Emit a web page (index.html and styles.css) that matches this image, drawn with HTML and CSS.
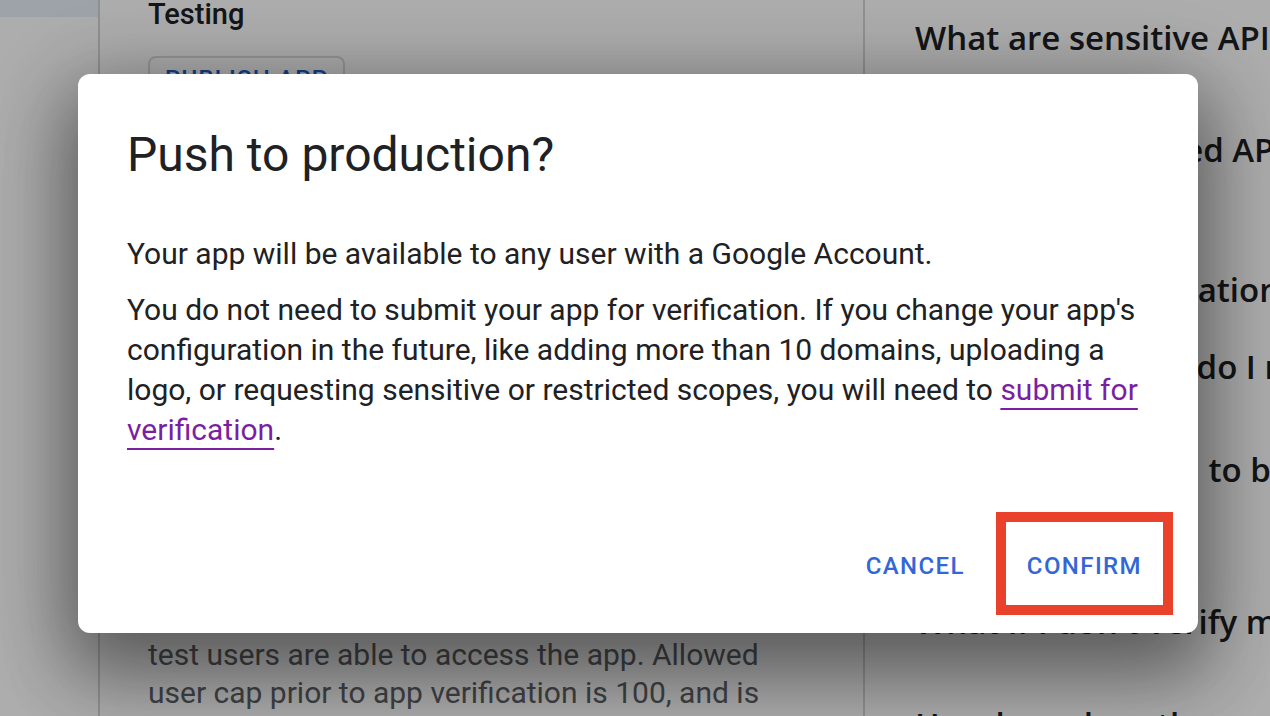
FILE: index.html
```html
<!DOCTYPE html>
<html lang="en">
<head>
<meta charset="utf-8">
<title>OAuth consent screen</title>
<link rel="stylesheet" href="styles.css">
</head>
<body>
<div class="page">
  <nav class="nav">
    <div class="nav-item nav-item-active"></div>
  </nav>
  <main class="main">
    <h2 class="status-title">Testing</h2>
    <button class="outline-btn">PUBLISH APP</button>
    <p class="status-text">While publishing status is set to "Testing", only test users are able to access the app. Allowed user cap prior to app verification is 100, and is counted over the entire lifetime of the app.</p>
  </main>
  <aside class="help">
    <h3 class="faq-q">What are sensitive API scopes?</h3>
    <h3 class="faq-q">What are restricted API scopes?</h3>
    <h3 class="faq-q">Who needs verification?</h3>
    <h3 class="faq-q">What verification do I need?</h3>
    <h3 class="faq-q">Does an app need to be verified?</h3>
    <h3 class="faq-q">What if I don't verify my app?</h3>
    <h3 class="faq-q">How long does the verification take?</h3>
  </aside>
</div>

<div class="scrim">
  <div class="dialog" role="dialog">
    <h1 class="dialog-title">Push to production?</h1>
    <div class="dialog-content">
      <p>Your app will be available to any user with a Google Account.</p>
      <p>You do not need to submit your app for verification. If you change your app's configuration in the future, like adding more than 10 domains, uploading a logo, or requesting sensitive or restricted scopes, you will need to <a class="link" href="#">submit for verification</a>.</p>
    </div>
    <div class="dialog-actions">
      <button class="text-btn">CANCEL</button>
      <div class="highlight">
        <button class="text-btn text-btn-confirm">CONFIRM</button>
      </div>
    </div>
  </div>
</div>
</body>
</html>
```

FILE: styles.css
```css
* { box-sizing: border-box; }

html, body {
  margin: 0;
  padding: 0;
}

body {
  width: 1270px;
  height: 716px;
  overflow: hidden;
  position: relative;
  background: #ffffff;
  font-family: Roboto, "Liberation Sans", Arial, sans-serif;
  color: #202124;
}

.page {
  display: flex;
  height: 716px;
}

.nav {
  width: 100px;
  flex: none;
  border-right: 2px solid #d6d6d6;
}

.nav-item {
  height: 17px;
}

.nav-item-active {
  background: #e9effa;
}

.main {
  width: 765px;
  flex: none;
  border-right: 2px solid #d6d6d6;
  padding-left: 48px;
}

.status-title {
  margin: -4px 0 0;
  font-size: 29px;
  line-height: 36px;
  font-weight: 500;
  color: #202124;
}

.outline-btn {
  display: block;
  margin-top: 24px;
  height: 46px;
  padding: 0 15px;
  border: 2px solid #dadce0;
  border-radius: 8px;
  background: #ffffff;
  font-family: Roboto, "Liberation Sans", Arial, sans-serif;
  font-size: 24px;
  font-weight: 500;
  letter-spacing: 1.2px;
  color: #1a5fc8;
}

.status-text {
  margin: 496px 0 0;
  width: 640px;
  font-size: 30px;
  line-height: 38px;
  color: #5f6368;
}

.help {
  flex: 1;
  padding: 18px 0 0 50px;
  overflow: hidden;
}

.faq-q {
  margin: 0;
  white-space: nowrap;
  font-family: "Open Sans", Roboto, sans-serif;
  font-size: 33px;
  line-height: 40px;
  font-weight: 600;
  color: #202124;
}

.faq-q:nth-child(2) { margin-top: 72px; }
.faq-q:nth-child(3) { margin-top: 100px; }
.faq-q:nth-child(4) { margin-top: 37px; }
.faq-q:nth-child(5) { margin-top: 63px; }
.faq-q:nth-child(6) { margin-top: 112px; }
.faq-q:nth-child(7) { margin-top: 63px; }

/* dialog overlay */
.scrim {
  position: absolute;
  inset: 0;
  background: rgba(0, 0, 0, 0.32);
}

.dialog {
  position: absolute;
  left: 78px;
  top: 74px;
  width: 1120px;
  height: 559px;
  display: flex;
  flex-direction: column;
  background: #ffffff;
  border-radius: 12px;
  box-shadow:
    0 22px 70px 8px rgba(0, 0, 0, 0.30),
    0 48px 76px 6px rgba(0, 0, 0, 0.16),
    0 18px 92px 16px rgba(0, 0, 0, 0.12);
}

.dialog-title {
  margin: 0;
  padding: 49px 48px 0 49px;
  font-size: 48px;
  line-height: 64px;
  font-weight: 400;
  color: #202124;
}

.dialog-content {
  padding: 47px 48px 0 49px;
  font-size: 30px;
  line-height: 40px;
  color: #202124;
}

.dialog-content p {
  margin: 0 0 16px;
}

.link {
  color: #7b1fa2;
  text-decoration: underline;
  text-decoration-thickness: 2px;
  text-underline-offset: 8px;
}

.dialog-actions {
  margin-top: auto;
  display: flex;
  justify-content: flex-end;
  align-items: center;
  gap: 15px;
  padding: 0 25px 18px 0;
}

.text-btn {
  height: 72px;
  padding: 5px 16px 0;
  border: none;
  background: transparent;
  font-family: Roboto, "Liberation Sans", Arial, sans-serif;
  font-size: 24px;
  font-weight: 500;
  letter-spacing: 1.4px;
  color: #3367d6;
}

.highlight {
  height: 103px;
  border: 10px solid #e9412b;
  display: flex;
  align-items: center;
  padding: 0 5px;
}

.text-btn-confirm {
  height: 83px;
}
```
